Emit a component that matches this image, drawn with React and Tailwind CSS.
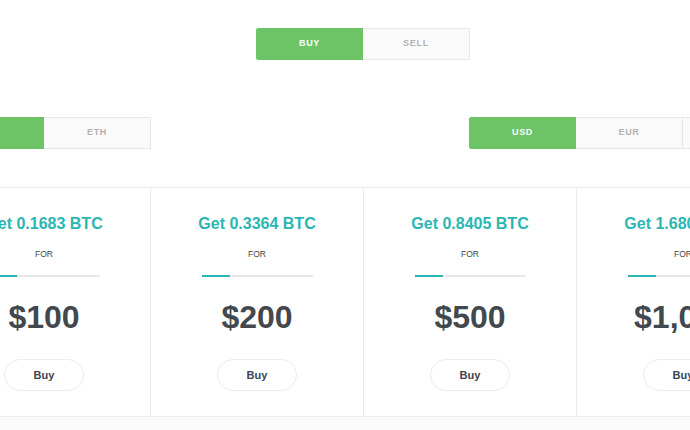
import React from "react";

const cards = [
  { btc: "0.1683", price: "$100" },
  { btc: "0.3364", price: "$200" },
  { btc: "0.8405", price: "$500" },
  { btc: "1.6809", price: "$1,000" },
];

function Seg({ items, active }) {
  return (
    <div className="flex">
      {items.map((it, i) => (
        <div
          key={it}
          className={
            i === active
              ? "w-[107px] h-[32px] flex items-center justify-center bg-[#6cc467] text-white text-[9px] font-bold tracking-[0.08em] rounded-l-[2px]"
              : "w-[107px] h-[32px] flex items-center justify-center bg-[#fafafa] border border-[#e6e6e6] border-l-0 text-[#b3b3b3] text-[9px] font-bold tracking-[0.08em]"
          }
        >
          {it}
        </div>
      ))}
    </div>
  );
}

export default function App() {
  return (
    <div
      className="w-[690px] h-[430px] overflow-hidden bg-white"
      style={{ fontFamily: '"Liberation Sans", Arial, sans-serif' }}
    >
      <div className="ml-[-63px] w-[852px]">
        <div className="pt-[28px] flex justify-center">
          <Seg items={["BUY", "SELL"]} active={0} />
        </div>
        <div className="mt-[57px] flex justify-between">
          <Seg items={["BTC", "ETH"]} active={0} />
          <div className="mr-[-1px]">
            <Seg items={["USD", "EUR", "GBP"]} active={0} />
          </div>
        </div>
        <div className="mt-[38px] ml-[1px] w-[852px] grid grid-cols-4 border-t border-b border-[#ebebeb]">
          {cards.map((c, i) => (
            <div
              key={i}
              className="h-[228px] border-r border-[#ebebeb] flex flex-col items-center pt-[26px]"
            >
              <div className="text-[16px] leading-[20px] font-bold text-[#2bb6b2]">
                Get {c.btc} BTC
              </div>
              <div className="mt-[15px] text-[8.5px] leading-[10px] text-[#444]">FOR</div>
              <div className="mt-[16px] w-[111px] h-[2px] bg-[#e8e8e8] flex">
                <div className="w-[28px] h-[2px] bg-[#2bb6b2]" />
              </div>
              <div className="mt-[22px] text-[32px] leading-[36px] font-bold text-[#42484d]">
                {c.price}
              </div>
              <div className="mt-[24px] w-[80px] h-[32px] rounded-full border border-[#ececec] flex items-center justify-center text-[11px] font-bold text-[#3a4450]">
                Buy
              </div>
            </div>
          ))}
        </div>
        <div className="h-[20px] bg-[#fbfbfb]" />
      </div>
    </div>
  );
}
